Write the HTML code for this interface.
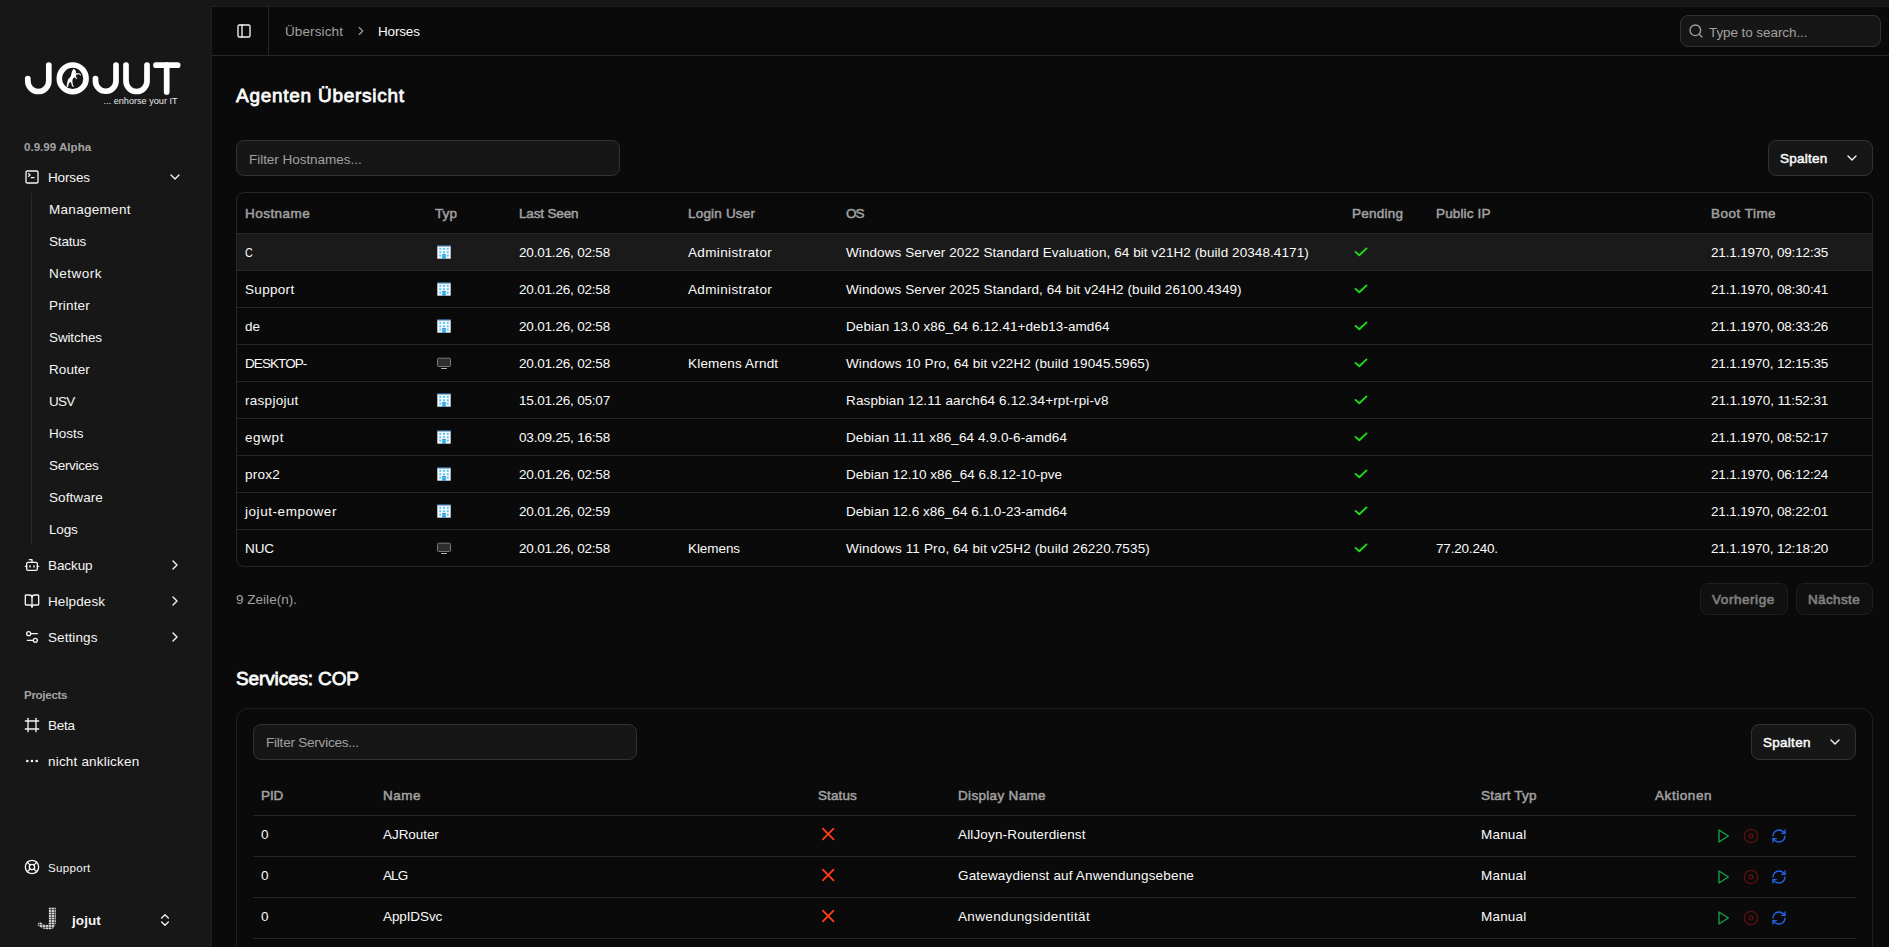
<!DOCTYPE html>
<html lang="de">
<head>
<meta charset="utf-8">
<title>Jojut - Horses</title>
<style>
*{box-sizing:border-box;margin:0;padding:0}
html,body{width:1889px;height:947px;overflow:hidden;background:#171717}
body{font-family:"Liberation Sans",sans-serif;font-size:13.5px;color:#fafafa;position:relative}
.abs{position:absolute}
.t{position:absolute;white-space:nowrap;line-height:21px;height:20px}
svg{display:block}
/* sidebar */
#sb{position:absolute;left:0;top:0;width:212px;height:947px;background:#171717}
.nav{font-size:13.5px;color:#f5f5f5}
.sub{font-size:13.5px;color:#f5f5f5;left:49px}
.lbl{font-size:11.6px;font-weight:bold;color:#a3a3a3;left:24px}
.ico{position:absolute;width:16px;height:16px;fill:none;stroke:#f5f5f5;stroke-width:2;stroke-linecap:round;stroke-linejoin:round}
/* main */
#main{position:absolute;left:212px;top:7px;width:1700px;height:960px;background:#0a0a0a;box-shadow:0 0 0 1px #1e1e1e}
#hdr{position:absolute;left:0;top:0;width:100%;height:49px;border-bottom:1px solid #262626}
.h2{font-size:19px;font-weight:normal;-webkit-text-stroke:0.8px #fafafa;color:#fafafa;line-height:29px;height:28px}
.inp{position:absolute;height:36px;border:1px solid #323232;border-radius:8px;background:#161616}
.ph{color:#a1a1a1;font-size:13.5px}
.btn{position:absolute;height:36px;border:1px solid #323232;border-radius:8px;background:#161616}
.btn .t{font-weight:normal;-webkit-text-stroke:0.5px #fafafa;font-size:13.5px;color:#fafafa}
.th{font-weight:normal;-webkit-text-stroke:0.5px #a1a1a1;color:#a1a1a1;font-size:13.5px}
.td{color:#fafafa;font-size:13.5px}
.hl{position:absolute;height:1px;background:#262626}
</style>
</head>
<body>
<div id="sb">
  <!-- logo placeholder -->
  <svg id="logo" class="abs" style="left:0;top:50px" width="212" height="65" viewBox="0 50 212 65">
    <g fill="none" stroke="#fff" stroke-width="5.7" stroke-linecap="round" stroke-linejoin="round">
      <path d="M48.8 65 V81 A10.5 10.5 0 0 1 27.8 81 V78.6"/>
      <circle cx="72.7" cy="78.4" r="13.4" stroke-width="5.6"/>
      <path d="M116 65 V81 A10.25 10.25 0 0 1 95.5 81 V78.6"/>
      <path d="M126 65 V81 A10.5 10.5 0 0 0 147 81 V65"/>
      <path d="M156 65.2 H177.6"/>
      <path d="M166.7 65.2 V92"/>
    </g>
    <path fill="#fff" d="M73.6 68.9 L73.0 69.6 L72.0 71.5 L71.4 73.5 L70.9 76.0 L69.6 77.8 L68.3 79.0 L67.6 81.0 L67.2 83.0 L66.7 85.3 L66.9 86.8 L68.0 86.9 L68.3 85.6 L68.9 83.6 L69.9 82.3 L70.3 81.9 L70.9 82.2 L71.4 84.0 L72.0 85.9 L73.3 86.9 L73.9 86.5 L73.0 85.0 L72.6 83.0 L72.4 81.0 L72.6 79.5 L73.4 78.0 L74.6 77.2 L75.6 78.3 L76.6 79.2 L77.1 78.6 L76.3 77.2 L75.8 76.0 L76.0 74.9 L77.5 74.4 L79.0 74.3 L80.2 75.0 L80.9 76.0 L81.0 75.0 L80.2 73.8 L79.0 73.2 L77.2 73.3 L75.8 73.6 L75.3 72.9 L75.9 72.8 L76.2 72.2 L75.6 70.8 L74.8 69.6 Z"/>
    <text x="177.6" y="104.3" text-anchor="end" font-family="Liberation Sans, sans-serif" font-size="8.6" fill="#e8e8e8" textLength="74" lengthAdjust="spacingAndGlyphs">... enhorse your IT</text>
  </svg>

  <div class="t lbl" style="top:136px;letter-spacing:-0.003px/*f*/">0.9.99 Alpha</div>

  <svg class="ico" style="left:24px;top:169px" viewBox="0 0 24 24"><path d="m7 11 2-2-2-2"/><path d="M11 13h4"/><rect width="18" height="18" x="3" y="3" rx="2" ry="2"/></svg>
  <div class="t nav" style="left:48px;top:167px;letter-spacing:-0.128px/*f*/">Horses</div>
  <svg class="ico" style="left:167px;top:169px" viewBox="0 0 24 24"><path d="m6 9 6 6 6-6"/></svg>

  <div class="abs" style="left:31px;top:193px;width:1px;height:352px;background:#2a2a2a"></div>
  <div class="t sub" style="top:199px;letter-spacing:0.299px/*f*/">Management</div>
  <div class="t sub" style="top:231px;letter-spacing:-0.180px/*f*/">Status</div>
  <div class="t sub" style="top:263px;letter-spacing:0.498px/*f*/">Network</div>
  <div class="t sub" style="top:295px;letter-spacing:0.162px/*f*/">Printer</div>
  <div class="t sub" style="top:327px;letter-spacing:-0.129px/*f*/">Switches</div>
  <div class="t sub" style="top:359px;letter-spacing:0.061px/*f*/">Router</div>
  <div class="t sub" style="top:391px;letter-spacing:-0.722px/*f*/">USV</div>
  <div class="t sub" style="top:423px;letter-spacing:0.017px/*f*/">Hosts</div>
  <div class="t sub" style="top:455px;letter-spacing:-0.296px/*f*/">Services</div>
  <div class="t sub" style="top:487px;letter-spacing:0.077px/*f*/">Software</div>
  <div class="t sub" style="top:519px;letter-spacing:-0.170px/*f*/">Logs</div>

  <svg class="ico" style="left:24px;top:557px" viewBox="0 0 24 24"><path d="M12 8V4H8"/><rect width="16" height="12" x="4" y="8" rx="2"/><path d="M2 14h2"/><path d="M20 14h2"/><path d="M15 13v2"/><path d="M9 13v2"/></svg>
  <div class="t nav" style="left:48px;top:555px;letter-spacing:-0.089px/*f*/">Backup</div>
  <svg class="ico" style="left:167px;top:557px" viewBox="0 0 24 24"><path d="m9 18 6-6-6-6"/></svg>

  <svg class="ico" style="left:24px;top:593px" viewBox="0 0 24 24"><path d="M12 7v14"/><path d="M3 18a1 1 0 0 1-1-1V4a1 1 0 0 1 1-1h5a4 4 0 0 1 4 4 4 4 0 0 1 4-4h5a1 1 0 0 1 1 1v13a1 1 0 0 1-1 1h-6a3 3 0 0 0-3 3 3 3 0 0 0-3-3z"/></svg>
  <div class="t nav" style="left:48px;top:591px;letter-spacing:0.102px/*f*/">Helpdesk</div>
  <svg class="ico" style="left:167px;top:593px" viewBox="0 0 24 24"><path d="m9 18 6-6-6-6"/></svg>

  <svg class="ico" style="left:24px;top:629px" viewBox="0 0 24 24"><path d="M20 7h-9"/><path d="M14 17H5"/><circle cx="17" cy="17" r="3"/><circle cx="7" cy="7" r="3"/></svg>
  <div class="t nav" style="left:48px;top:627px;letter-spacing:0.090px/*f*/">Settings</div>
  <svg class="ico" style="left:167px;top:629px" viewBox="0 0 24 24"><path d="m9 18 6-6-6-6"/></svg>

  <div class="t lbl" style="top:684px;letter-spacing:-0.321px/*f*/">Projects</div>
  <svg class="ico" style="left:24px;top:717px" viewBox="0 0 24 24"><line x1="22" x2="2" y1="6" y2="6"/><line x1="22" x2="2" y1="18" y2="18"/><line x1="6" x2="6" y1="2" y2="22"/><line x1="18" x2="18" y1="2" y2="22"/></svg>
  <div class="t nav" style="left:48px;top:715px;letter-spacing:-0.245px/*f*/">Beta</div>
  <svg class="ico" style="left:24px;top:753px" viewBox="0 0 24 24"><circle cx="12" cy="12" r="1"/><circle cx="19" cy="12" r="1"/><circle cx="5" cy="12" r="1"/></svg>
  <div class="t nav" style="left:48px;top:751px;letter-spacing:0.189px/*f*/">nicht anklicken</div>

  <svg class="ico" style="left:24px;top:859px" viewBox="0 0 24 24"><circle cx="12" cy="12" r="10"/><path d="m4.93 4.93 4.24 4.24"/><path d="m14.83 9.17 4.24-4.24"/><path d="m14.83 14.83 4.24 4.24"/><path d="m9.17 14.83-4.24 4.24"/><circle cx="12" cy="12" r="4"/></svg>
  <div class="t nav" style="left:48px;top:857px;font-size:11.6px;letter-spacing:0.284px/*f*/">Support</div>

  <svg id="avatar" class="abs" style="left:34px;top:905px" width="26" height="28" viewBox="34 905 26 28">
    <defs><pattern id="spk" x="48.8" y="907.6" width="3" height="2.5" patternUnits="userSpaceOnUse"><rect x="0.1" y="0.1" width="2.2" height="1.75" fill="#fff"/></pattern></defs>
    <path fill="url(#spk)" d="M48.8 907.6 H55.8 V922 Q55.8 929.4 48.2 929.4 Q42 929.4 37.2 924.8 L39.6 921.4 Q43.5 924.9 46.8 924.9 Q48.8 924.9 48.8 922 Z"/>
  </svg>
  <div class="t nav" style="left:72px;top:910px;font-weight:bold;letter-spacing:0.080px/*f*/">jojut</div>
  <svg class="ico" style="left:157px;top:912px" viewBox="0 0 24 24"><path d="m7 15 5 5 5-5"/><path d="m7 9 5-5 5 5"/></svg>
</div>

<div id="main">
  <div id="hdr">
    <svg class="ico" style="left:24px;top:16px" viewBox="0 0 24 24"><rect width="18" height="18" x="3" y="3" rx="2"/><path d="M9 3v18"/></svg>
    <div class="abs" style="left:56px;top:0;width:1px;height:48px;background:#262626"></div>
    <div class="t" style="left:73px;top:14px;color:#a1a1a1;letter-spacing:0.119px/*f*/">Übersicht</div>
    <svg class="ico" style="left:142px;top:17px;width:14px;height:14px;stroke:#a1a1a1" viewBox="0 0 24 24"><path d="m9 18 6-6-6-6"/></svg>
    <div class="t" style="left:166px;top:14px;color:#fafafa;letter-spacing:-0.161px/*f*/">Horses</div>
    <div class="inp" style="left:1468px;top:8px;width:201px;height:32px"></div>
    <svg class="ico" style="left:1476px;top:16px;stroke:#a1a1a1" viewBox="0 0 24 24"><circle cx="11" cy="11" r="8"/><path d="m21 21-4.3-4.3"/></svg>
    <div class="t ph" style="left:1497px;top:15px;letter-spacing:-0.083px/*f*/">Type to search...</div>
  </div>

  <div class="t h2" style="left:24px;top:74px;letter-spacing:0.734px/*f*/">Agenten Übersicht</div>

  <div class="inp" style="left:24px;top:133px;width:384px"></div>
  <div class="t ph" style="left:37px;top:142px;letter-spacing:-0.036px/*f*/">Filter Hostnames...</div>

  <div class="btn" style="left:1556px;top:133px;width:105px">
    <div class="t" style="left:11px;top:7px;letter-spacing:0.258px/*f*/">Spalten</div>
    <svg class="ico" style="left:75px;top:9px" viewBox="0 0 24 24"><path d="m6 9 6 6 6-6"/></svg>
  </div>

  <!-- TABLE 1 -->
  <div id="t1" class="abs" style="left:24px;top:185px;width:1637px;height:375px;border:1px solid #262626;border-radius:8px;overflow:hidden"></div>

  <!-- T1START -->
  <div class="abs" style="left:25px;top:227px;width:1635px;height:36px;background:#1a1a1a"></div>
  <div class="t th" style="left:33px;top:196px;letter-spacing:0.459px/*f*/">Hostname</div>
  <div class="t th" style="left:223px;top:196px;letter-spacing:0.078px/*f*/">Typ</div>
  <div class="t th" style="left:307px;top:196px;letter-spacing:-0.155px/*f*/">Last Seen</div>
  <div class="t th" style="left:476px;top:196px;letter-spacing:0.190px/*f*/">Login User</div>
  <div class="t th" style="left:634px;top:196px;letter-spacing:-0.908px/*f*/">OS</div>
  <div class="t th" style="left:1140px;top:196px;letter-spacing:0.250px/*f*/">Pending</div>
  <div class="t th" style="left:1224px;top:196px;letter-spacing:0.147px/*f*/">Public IP</div>
  <div class="t th" style="left:1499px;top:196px;letter-spacing:0.480px/*f*/">Boot Time</div>
  <div class="hl" style="left:25px;top:226px;width:1635px"></div>
  <div class="t td" style="left:33px;top:235px;transform:scaleX(.8);transform-origin:0 50%;letter-spacing:0.100px/*f*/">C</div>
  <svg class="abs" style="left:225px;top:238px" width="14" height="14" viewBox="0 0 14 14"><use href="#bld"/></svg>
  <div class="t td" style="left:307px;top:235px;letter-spacing:-0.190px/*f*/">20.01.26, 02:58</div>
  <div class="t td" style="left:476px;top:235px;letter-spacing:0.359px/*f*/">Administrator</div>
  <div class="t td" style="left:634px;top:235px;letter-spacing:0.080px/*f*/">Windows Server 2022 Standard Evaluation, 64 bit v21H2 (build 20348.4171)</div>
  <svg class="abs" style="left:1141px;top:237px" width="16" height="16" viewBox="0 0 16 16"><use href="#chk"/></svg>
  <div class="t td" style="left:1499px;top:235px;letter-spacing:-0.153px/*f*/">21.1.1970, 09:12:35</div>
  <div class="hl" style="left:25px;top:263px;width:1635px"></div>
  <div class="t td" style="left:33px;top:272px;letter-spacing:0.315px/*f*/">Support</div>
  <svg class="abs" style="left:225px;top:275px" width="14" height="14" viewBox="0 0 14 14"><use href="#bld"/></svg>
  <div class="t td" style="left:307px;top:272px;letter-spacing:-0.190px/*f*/">20.01.26, 02:58</div>
  <div class="t td" style="left:476px;top:272px;letter-spacing:0.359px/*f*/">Administrator</div>
  <div class="t td" style="left:634px;top:272px;letter-spacing:0.089px/*f*/">Windows Server 2025 Standard, 64 bit v24H2 (build 26100.4349)</div>
  <svg class="abs" style="left:1141px;top:274px" width="16" height="16" viewBox="0 0 16 16"><use href="#chk"/></svg>
  <div class="t td" style="left:1499px;top:272px;letter-spacing:-0.153px/*f*/">21.1.1970, 08:30:41</div>
  <div class="hl" style="left:25px;top:300px;width:1635px"></div>
  <div class="t td" style="left:33px;top:309px;letter-spacing:-0.016px/*f*/">de</div>
  <svg class="abs" style="left:225px;top:312px" width="14" height="14" viewBox="0 0 14 14"><use href="#bld"/></svg>
  <div class="t td" style="left:307px;top:309px;letter-spacing:-0.190px/*f*/">20.01.26, 02:58</div>
  <div class="t td" style="left:634px;top:309px;letter-spacing:0.073px/*f*/">Debian 13.0 x86_64 6.12.41+deb13-amd64</div>
  <svg class="abs" style="left:1141px;top:311px" width="16" height="16" viewBox="0 0 16 16"><use href="#chk"/></svg>
  <div class="t td" style="left:1499px;top:309px;letter-spacing:-0.153px/*f*/">21.1.1970, 08:33:26</div>
  <div class="hl" style="left:25px;top:337px;width:1635px"></div>
  <div class="t td" style="left:33px;top:346px;letter-spacing:-0.921px/*f*/">DESKTOP-</div>
  <svg class="abs" style="left:225px;top:349px" width="14" height="14" viewBox="0 0 14 14"><use href="#mon"/></svg>
  <div class="t td" style="left:307px;top:346px;letter-spacing:-0.190px/*f*/">20.01.26, 02:58</div>
  <div class="t td" style="left:476px;top:346px;letter-spacing:0.193px/*f*/">Klemens Arndt</div>
  <div class="t td" style="left:634px;top:346px;letter-spacing:0.120px/*f*/">Windows 10 Pro, 64 bit v22H2 (build 19045.5965)</div>
  <svg class="abs" style="left:1141px;top:348px" width="16" height="16" viewBox="0 0 16 16"><use href="#chk"/></svg>
  <div class="t td" style="left:1499px;top:346px;letter-spacing:-0.153px/*f*/">21.1.1970, 12:15:35</div>
  <div class="hl" style="left:25px;top:374px;width:1635px"></div>
  <div class="t td" style="left:33px;top:383px;letter-spacing:0.285px/*f*/">raspjojut</div>
  <svg class="abs" style="left:225px;top:386px" width="14" height="14" viewBox="0 0 14 14"><use href="#bld"/></svg>
  <div class="t td" style="left:307px;top:383px;letter-spacing:-0.190px/*f*/">15.01.26, 05:07</div>
  <div class="t td" style="left:634px;top:383px;letter-spacing:0.142px/*f*/">Raspbian 12.11 aarch64 6.12.34+rpt-rpi-v8</div>
  <svg class="abs" style="left:1141px;top:385px" width="16" height="16" viewBox="0 0 16 16"><use href="#chk"/></svg>
  <div class="t td" style="left:1499px;top:383px;letter-spacing:-0.100px/*f*/">21.1.1970, 11:52:31</div>
  <div class="hl" style="left:25px;top:411px;width:1635px"></div>
  <div class="t td" style="left:33px;top:420px;letter-spacing:0.594px/*f*/">egwpt</div>
  <svg class="abs" style="left:225px;top:423px" width="14" height="14" viewBox="0 0 14 14"><use href="#bld"/></svg>
  <div class="t td" style="left:307px;top:420px;letter-spacing:-0.190px/*f*/">03.09.25, 16:58</div>
  <div class="t td" style="left:634px;top:420px;letter-spacing:0.094px/*f*/">Debian 11.11 x86_64 4.9.0-6-amd64</div>
  <svg class="abs" style="left:1141px;top:422px" width="16" height="16" viewBox="0 0 16 16"><use href="#chk"/></svg>
  <div class="t td" style="left:1499px;top:420px;letter-spacing:-0.153px/*f*/">21.1.1970, 08:52:17</div>
  <div class="hl" style="left:25px;top:448px;width:1635px"></div>
  <div class="t td" style="left:33px;top:457px;letter-spacing:0.244px/*f*/">prox2</div>
  <svg class="abs" style="left:225px;top:460px" width="14" height="14" viewBox="0 0 14 14"><use href="#bld"/></svg>
  <div class="t td" style="left:307px;top:457px;letter-spacing:-0.190px/*f*/">20.01.26, 02:58</div>
  <div class="t td" style="left:634px;top:457px;letter-spacing:0.018px/*f*/">Debian 12.10 x86_64 6.8.12-10-pve</div>
  <svg class="abs" style="left:1141px;top:459px" width="16" height="16" viewBox="0 0 16 16"><use href="#chk"/></svg>
  <div class="t td" style="left:1499px;top:457px;letter-spacing:-0.153px/*f*/">21.1.1970, 06:12:24</div>
  <div class="hl" style="left:25px;top:485px;width:1635px"></div>
  <div class="t td" style="left:33px;top:494px;letter-spacing:0.554px/*f*/">jojut-empower</div>
  <svg class="abs" style="left:225px;top:497px" width="14" height="14" viewBox="0 0 14 14"><use href="#bld"/></svg>
  <div class="t td" style="left:307px;top:494px;letter-spacing:-0.190px/*f*/">20.01.26, 02:59</div>
  <div class="t td" style="left:634px;top:494px;letter-spacing:0.033px/*f*/">Debian 12.6 x86_64 6.1.0-23-amd64</div>
  <svg class="abs" style="left:1141px;top:496px" width="16" height="16" viewBox="0 0 16 16"><use href="#chk"/></svg>
  <div class="t td" style="left:1499px;top:494px;letter-spacing:-0.153px/*f*/">21.1.1970, 08:22:01</div>
  <div class="hl" style="left:25px;top:522px;width:1635px"></div>
  <div class="t td" style="left:33px;top:531px;letter-spacing:-0.083px/*f*/">NUC</div>
  <svg class="abs" style="left:225px;top:534px" width="14" height="14" viewBox="0 0 14 14"><use href="#mon"/></svg>
  <div class="t td" style="left:307px;top:531px;letter-spacing:-0.190px/*f*/">20.01.26, 02:58</div>
  <div class="t td" style="left:476px;top:531px;letter-spacing:-0.076px/*f*/">Klemens</div>
  <div class="t td" style="left:634px;top:531px;letter-spacing:0.150px/*f*/">Windows 11 Pro, 64 bit v25H2 (build 26220.7535)</div>
  <svg class="abs" style="left:1141px;top:533px" width="16" height="16" viewBox="0 0 16 16"><use href="#chk"/></svg>
  <div class="t td" style="left:1224px;top:531px;letter-spacing:-0.191px/*f*/">77.20.240.</div>
  <div class="t td" style="left:1499px;top:531px;letter-spacing:-0.153px/*f*/">21.1.1970, 12:18:20</div>
  <!-- T1END -->

  <div class="t" style="left:24px;top:582px;color:#a1a1a1;letter-spacing:0.020px/*f*/">9 Zeile(n).</div>
  <div class="btn" style="left:1488px;top:576px;width:88px;height:32px;opacity:.5"><div class="t" style="left:11px;top:5px;letter-spacing:0.556px/*f*/">Vorherige</div></div>
  <div class="btn" style="left:1584px;top:576px;width:77px;height:32px;opacity:.5"><div class="t" style="left:11px;top:5px;letter-spacing:0.353px/*f*/">Nächste</div></div>

  <div class="t h2" style="left:24px;top:657px;letter-spacing:-0.130px/*f*/">Services: COP</div>

  <!-- CARD 2 -->
  <div id="c2" class="abs" style="left:24px;top:701px;width:1637px;height:300px;border:1px solid #1f1f1f;border-radius:12px"></div>
  <!-- T2START -->
  <div class="inp" style="left:41px;top:717px;width:384px"></div>
  <div class="t ph" style="left:54px;top:725px;letter-spacing:-0.216px/*f*/">Filter Services...</div>
  <div class="btn" style="left:1539px;top:717px;width:105px"><div class="t" style="left:11px;top:7px;letter-spacing:0.272px/*f*/">Spalten</div><svg class="ico" style="left:75px;top:9px" viewBox="0 0 24 24"><path d="m6 9 6 6 6-6"/></svg></div>
  <div class="t th" style="left:49px;top:778px;letter-spacing:-0.072px/*f*/">PID</div>
  <div class="t th" style="left:171px;top:778px;letter-spacing:0.471px/*f*/">Name</div>
  <div class="t th" style="left:606px;top:778px;letter-spacing:0.120px/*f*/">Status</div>
  <div class="t th" style="left:746px;top:778px;letter-spacing:0.322px/*f*/">Display Name</div>
  <div class="t th" style="left:1269px;top:778px;letter-spacing:0.224px/*f*/">Start Typ</div>
  <div class="t th" style="left:1443px;top:778px;letter-spacing:0.569px/*f*/">Aktionen</div>
  <div class="hl" style="left:41px;top:808px;width:1603px"></div>
  <div class="t td" style="left:49px;top:817px;letter-spacing:0.084px/*f*/">0</div>
  <div class="t td" style="left:171px;top:817px;letter-spacing:-0.060px/*f*/">AJRouter</div>
  <svg class="abs" style="left:608px;top:819px" width="16" height="16" viewBox="0 0 16 16"><use href="#xx"/></svg>
  <div class="t td" style="left:746px;top:817px;letter-spacing:0.152px/*f*/">AllJoyn-Routerdienst</div>
  <div class="t td" style="left:1269px;top:817px;letter-spacing:0.186px/*f*/">Manual</div>
  <svg class="abs" style="left:1503px;top:821px" width="16" height="16" viewBox="0 0 24 24"><use href="#play"/></svg>
  <svg class="abs" style="left:1531px;top:821px" width="16" height="16" viewBox="0 0 24 24"><use href="#stop"/></svg>
  <svg class="abs" style="left:1559px;top:821px" width="16" height="16" viewBox="0 0 24 24"><use href="#rot"/></svg>
  <div class="hl" style="left:41px;top:849px;width:1603px"></div>
  <div class="t td" style="left:49px;top:858px;letter-spacing:0.084px/*f*/">0</div>
  <div class="t td" style="left:171px;top:858px;letter-spacing:-0.905px/*f*/">ALG</div>
  <svg class="abs" style="left:608px;top:860px" width="16" height="16" viewBox="0 0 16 16"><use href="#xx"/></svg>
  <div class="t td" style="left:746px;top:858px;letter-spacing:0.169px/*f*/">Gatewaydienst auf Anwendungsebene</div>
  <div class="t td" style="left:1269px;top:858px;letter-spacing:0.186px/*f*/">Manual</div>
  <svg class="abs" style="left:1503px;top:862px" width="16" height="16" viewBox="0 0 24 24"><use href="#play"/></svg>
  <svg class="abs" style="left:1531px;top:862px" width="16" height="16" viewBox="0 0 24 24"><use href="#stop"/></svg>
  <svg class="abs" style="left:1559px;top:862px" width="16" height="16" viewBox="0 0 24 24"><use href="#rot"/></svg>
  <div class="hl" style="left:41px;top:890px;width:1603px"></div>
  <div class="t td" style="left:49px;top:899px;letter-spacing:0.084px/*f*/">0</div>
  <div class="t td" style="left:171px;top:899px;letter-spacing:-0.104px/*f*/">AppIDSvc</div>
  <svg class="abs" style="left:608px;top:901px" width="16" height="16" viewBox="0 0 16 16"><use href="#xx"/></svg>
  <div class="t td" style="left:746px;top:899px;letter-spacing:0.350px/*f*/">Anwendungsidentität</div>
  <div class="t td" style="left:1269px;top:899px;letter-spacing:0.186px/*f*/">Manual</div>
  <svg class="abs" style="left:1503px;top:903px" width="16" height="16" viewBox="0 0 24 24"><use href="#play"/></svg>
  <svg class="abs" style="left:1531px;top:903px" width="16" height="16" viewBox="0 0 24 24"><use href="#stop"/></svg>
  <svg class="abs" style="left:1559px;top:903px" width="16" height="16" viewBox="0 0 24 24"><use href="#rot"/></svg>
  <div class="hl" style="left:41px;top:931px;width:1603px"></div>
  <!-- T2END -->
</div>
<svg width="0" height="0" style="position:absolute">
 <defs>
  <g id="bld"><rect x="0.3" y="0.6" width="13.4" height="13.1" fill="#f4f7fb"/><rect x="0.3" y="0.3" width="13.4" height="1.1" fill="#14508f"/>
   <g fill="#4fc8f4"><rect x="2.3" y="2.9" width="1.9" height="1.9"/><rect x="6.05" y="2.9" width="1.9" height="1.9"/><rect x="9.8" y="2.9" width="1.9" height="1.9"/><rect x="2.3" y="6.3" width="1.9" height="1.9"/><rect x="6.05" y="6.3" width="1.9" height="1.9"/><rect x="9.8" y="6.3" width="1.9" height="1.9"/><rect x="2.3" y="9.7" width="1.9" height="1.9"/><rect x="9.8" y="9.7" width="1.9" height="1.9"/></g>
   <rect x="5.2" y="9.6" width="3.6" height="4.1" fill="url(#dg)"/><rect x="5.2" y="9.3" width="3.6" height="0.8" fill="#1565b8"/></g>
  <linearGradient id="dg" x1="0" y1="0" x2="0" y2="1"><stop offset="0" stop-color="#55cdf6"/><stop offset="1" stop-color="#1b8fe3"/></linearGradient>
  <g id="mon"><rect x="0.5" y="2.2" width="13" height="8.3" rx="1" fill="#2e2e2e" stroke="#777" stroke-width="1"/><rect x="4.2" y="12" width="5.6" height="0.9" fill="#d0d0d0"/></g>
  <g id="chk" fill="none" stroke="#20dc18" stroke-width="1.9" stroke-linecap="round" stroke-linejoin="round"><path d="M2.5 7.9 L6.3 11.2 L13.5 4.4"/></g>
  <g id="xx" fill="none" stroke="#ff3c19" stroke-width="1.9" stroke-linecap="round" stroke-linejoin="round"><path d="M2.9 2.7 L13.5 13.3"/><path d="M13.5 2.7 L2.9 13.3"/></g>
  <g id="play" fill="none" stroke="#16a34a" stroke-width="2" stroke-linecap="round" stroke-linejoin="round"><polygon points="6 3 20 12 6 21 6 3"/></g>
  <g id="stop" fill="none" stroke="#5a0f14" stroke-width="2" stroke-linecap="round" stroke-linejoin="round"><circle cx="12" cy="12" r="10"/><circle cx="12" cy="12" r="3"/></g>
  <g id="rot" fill="none" stroke="#2563eb" stroke-width="2" stroke-linecap="round" stroke-linejoin="round"><path d="M3 12a9 9 0 0 1 9-9 9.75 9.75 0 0 1 6.74 2.74L21 8"/><path d="M21 3v5h-5"/><path d="M21 12a9 9 0 0 1-9 9 9.75 9.75 0 0 1-6.74-2.74L3 16"/><path d="M8 16H3v5"/></g>
 </defs>
</svg>
</body>
</html>
